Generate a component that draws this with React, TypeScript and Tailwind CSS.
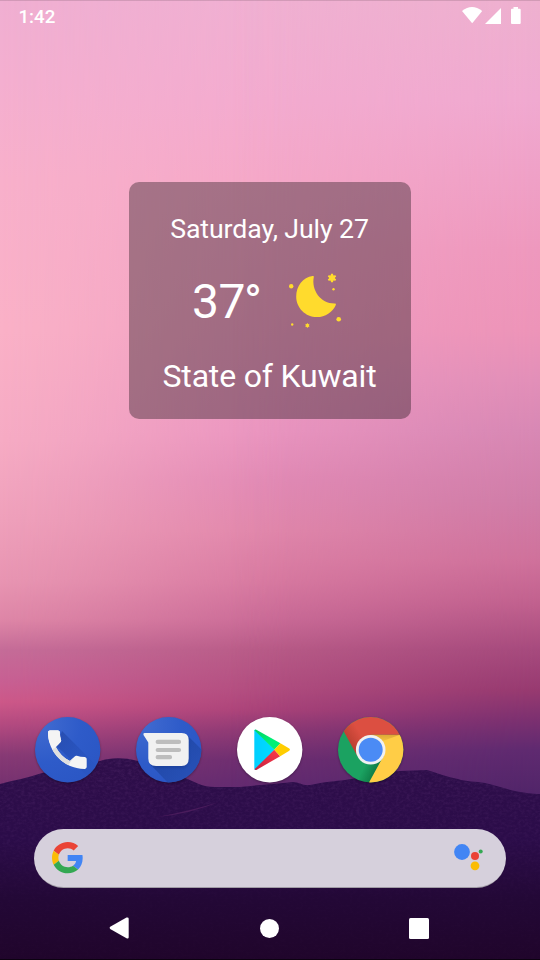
import React from "react";

type Stop = [number, string];

// Vertical colour ramps of the dusk sky at the left, middle and right.
const skyLeft: Stop[] = [
  [0, "#f0afd2"], [80, "#f4afd0"], [180, "#f8b0cb"], [330, "#fab1c7"], [440, "#f6abc4"],
  [520, "#efa0bb"], [580, "#e895b2"], [620, "#de86a7"], [650, "#c56c98"], [680, "#c86093"],
  [702, "#cd5889"], [725, "#b34a80"], [755, "#883a75"], [790, "#73306f"],
];
const skyMiddle: Stop[] = [
  [0, "#f0b0d2"], [100, "#f3abcf"], [180, "#f5a8c8"], [300, "#f1a0c3"], [430, "#ea95c0"],
  [480, "#e28ab5"], [530, "#e187ab"], [580, "#d87aa1"], [620, "#ca6b97"], [650, "#b85b87"],
  [690, "#b14d7f"], [710, "#aa4379"], [730, "#8d3974"], [760, "#6c2d70"], [790, "#602a70"],
];
const skyRight: Stop[] = [
  [0, "#eeb0cf"], [100, "#f0a9d0"], [180, "#efa0c6"], [250, "#ee98bd"], [330, "#ed94b8"],
  [380, "#e28fb8"], [430, "#d888b4"], [500, "#d07da8"], [560, "#cf719b"], [600, "#c2628f"],
  [650, "#a64a7d"], [690, "#973a70"], [720, "#7b3070"], [750, "#5f2a70"], [800, "#4f2468"],
];

function Ramp({ id, stops }: { id: string; stops: Stop[] }) {
  return (
    <linearGradient id={id} gradientUnits="userSpaceOnUse" x1="0" y1="0" x2="0" y2="960">
      {stops.map(([y, color]) => (
        <stop key={y} offset={y / 960} stopColor={color} />
      ))}
    </linearGradient>
  );
}

// Horizontal fade with eased ends, so that neighbouring ramps join without a seam.
function Fade({ id, from, to }: { id: string; from: number; to: number }) {
  const steps = [0, 0.125, 0.25, 0.375, 0.5, 0.625, 0.75, 0.875, 1];
  return (
    <linearGradient id={id} gradientUnits="userSpaceOnUse" x1={from} y1="0" x2={to} y2="0">
      {steps.map((t) => (
        <stop key={t} offset={t} stopColor="#fff" stopOpacity={0.5 * t + 0.5 * t * t * (3 - 2 * t)} />
      ))}
    </linearGradient>
  );
}

function Wallpaper() {
  const ridge =
    "M0 784 C14 780 28 778 42 773 C62 768 80 767 100 761 C110 758 122 757 138 761 C155 766 170 772 185 778 C195 782 202 787 215 787 L240 787 C258 785 275 784 293 782 C299 782 303 786 310 785 C325 782 335 781 345 780 C365 777 382 772 400 771 L427 770 C438 773 447 777 458 779 C466 782 476 781 485 783 C495 785 505 789 515 791 C525 793 532 794 540 794 V960 H0 Z";
  return (
    <svg className="absolute inset-0" width="540" height="960" viewBox="0 0 540 960">
      <defs>
        <Ramp id="skyL" stops={skyLeft} />
        <Ramp id="skyM" stops={skyMiddle} />
        <Ramp id="skyR" stops={skyRight} />
        <Fade id="fadeM" from={0} to={290} />
        <Fade id="fadeR" from={230} to={540} />
        <mask id="maskM"><rect width="540" height="960" fill="url(#fadeM)" /></mask>
        <mask id="maskR"><rect width="540" height="960" fill="url(#fadeR)" /></mask>
        <linearGradient id="ground" gradientUnits="userSpaceOnUse" x1="0" y1="758" x2="0" y2="960">
          <stop offset="0" stopColor="#2e0e4a" />
          <stop offset="0.4" stopColor="#2b0c49" />
          <stop offset="0.7" stopColor="#230836" />
          <stop offset="1" stopColor="#20052b" />
        </linearGradient>
        <filter id="grain" x="0" y="0" width="1" height="1">
          <feTurbulence type="fractalNoise" baseFrequency="0.28 0.4" numOctaves="3" seed="4" />
          <feColorMatrix values="0 0 0 0 0.42  0 0 0 0 0.16  0 0 0 0 0.5  1.2 0 0 0 -0.45" />
          <feComposite in2="SourceGraphic" operator="in" />
        </filter>
        <linearGradient id="grainFade" gradientUnits="userSpaceOnUse" x1="0" y1="758" x2="0" y2="900">
          <stop offset="0" stopColor="#fff" /><stop offset="1" stopColor="#222" />
        </linearGradient>
        <mask id="maskGrain"><rect width="540" height="960" fill="url(#grainFade)" /></mask>
      </defs>
      <rect width="540" height="960" fill="url(#skyL)" />
      <rect width="540" height="960" fill="url(#skyM)" mask="url(#maskM)" />
      <rect width="540" height="960" fill="url(#skyR)" mask="url(#maskR)" />
      <path d={ridge} fill="url(#ground)" />
      <g mask="url(#maskGrain)" opacity="0.22"><path d={ridge} filter="url(#grain)" /></g>
      <path d="M157 817 Q190 811 219 802 Q190 814 157 817Z" fill="#4a1c5c" />
      <rect width="540" height="1" fill="#000" opacity="0.12" />
      <rect y="959" width="540" height="1" fill="#000" opacity="0.6" />
    </svg>
  );
}

function StatusBar() {
  return (
    <header className="flex h-8 items-center justify-between pl-[18.500px] pr-[18px] text-white">
      <span className="pt-px text-[18.7px] leading-8 font-medium">1:42</span>
      <svg width="61" height="32" viewBox="461 0 61 32" fill="currentColor">
        <path d="M462 11 Q472 3 482.200 11 L472.200 23.200 Z" />
        <path d="M485 24 L501 8 V24 Z" />
        <path d="M513.500 7 h4.500 v1.700 h1.700 q1 0 1 1 V23 q0 1-1 1 h-7.700 q-1 0-1-1 V9.700 q0-1 1-1 h1.500 Z" />
      </svg>
    </header>
  );
}

function MoonIcon() {
  return (
    <svg width="54" height="58" viewBox="288 271 54 58" fill="#ffdb2d">
      <path d="M312.600 276 C313.500 275.900 314 276.300 313.800 277 C311.200 290 320.500 303.500 334.500 303.500 C335.700 303.400 336.200 304 335.800 305 C332.500 312.500 325.200 317.100 317 317.100 C305.500 317.100 296.200 308 296.200 296.500 C296.200 286 303 277.400 312.600 276 Z" />
      <circle cx="291.200" cy="286.200" r="2.200" />
      <circle cx="333.500" cy="289.300" r="1.200" />
      <circle cx="338.700" cy="319.300" r="2.300" />
      <circle cx="292.200" cy="324.500" r="1.200" />
      <circle cx="307.400" cy="325.500" r="1.700" />
      <path d="M307.400 323.300 v4.400 M305.500 324.400 l3.800 2.200 M309.300 324.400 l-3.800 2.200" stroke="#ffdb2d" strokeWidth="1" />
      <circle cx="332" cy="278" r="3" />
      <path d="M332 273.800 v8.400 M328.300 275.900 l7.400 4.200 M335.700 275.900 l-7.400 4.200" stroke="#ffdb2d" strokeWidth="2.200" />
    </svg>
  );
}

function WeatherCard() {
  return (
    <section className="mt-[149.500px] flex h-[237px] w-[282px] flex-col items-center self-center rounded-[10px] bg-black/33 text-white">
      <p className="mt-[31.500px] pr-px text-[26.7px] leading-8 tracking-[-0.09px] whitespace-nowrap">Saturday, July 27</p>
      <div className="mt-[26px] flex h-[58px] items-center gap-[26px] pr-[5.500px]">
        <span className="pt-1 text-[48px] leading-[56px] tracking-[-0.5px]">
          37<span className="inline-block -translate-x-px translate-y-px">°</span>
        </span>
        <MoonIcon />
      </div>
      <p className="mt-[26.500px] pr-px text-[32px] leading-10 tracking-[-0.18px] whitespace-nowrap">State of Kuwait</p>
    </section>
  );
}

function AppIcon({ children }: { children: React.ReactNode }) {
  return (
    <svg className="drop-shadow-[0_1px_1px_rgba(0,0,0,0.3)]" width="66" height="66" viewBox="0 0 66 66">
      {children}
    </svg>
  );
}

function PhoneIcon() {
  const handset =
    "M6.620 10.790c1.440 2.830 3.760 5.140 6.590 6.590l2.200-2.200c.27-.27.67-.36 1.020-.24 1.120.37 2.330.57 3.570.57.55 0 1 .45 1 1V20c0 .55-.45 1-1 1-9.390 0-17-7.610-17-17 0-.55.45-1 1-1h3.500c.55 0 1 .45 1 1 0 1.250.2 2.450.57 3.570.11.35.03.74-.25 1.020l-2.200 2.200z";
  return (
    <AppIcon>
      <defs>
        <radialGradient id="phoneBg" cx="0.1" cy="0.1" r="1"><stop offset="0" stopColor="#416bd0" /><stop offset="0.6" stopColor="#2e5bc9" /><stop offset="1" stopColor="#2b57c5" /></radialGradient>
        <linearGradient id="phoneShade" x1="0" y1="0" x2="1" y2="1"><stop offset="0.1" stopColor="#1d3f9e" stopOpacity="0.55" /><stop offset="0.9" stopColor="#2853bc" stopOpacity="0.1" /></linearGradient>
        <clipPath id="disc"><circle cx="32.700" cy="32.700" r="32.700" /></clipPath>
        <clipPath id="handset"><path d={handset} /></clipPath>
      </defs>
      <circle cx="32.700" cy="32.700" r="32.700" fill="url(#phoneBg)" />
      <g clipPath="url(#disc)">
        <path d="M27 14 L52 39 L66 53 V66 H59 L28 35 L21 29 Z" fill="url(#phoneShade)" />
      </g>
      <g transform="translate(6.550 6.750) scale(2.150)">
        <path d={handset} fill="#f4f4f4" />
        <path d="M6.620 10.790 L8.200 9.200 L14.800 15.800 L11.700 20.200 L3.800 12.700 Z" fill="#dfdfdf" clipPath="url(#handset)" />
        <path d="M3 3 H10 V7.600 L8.820 8.590 L6.620 10.790 L5.800 11.600 L3 8 Z" fill="#f4f4f4" clipPath="url(#handset)" />
      </g>
    </AppIcon>
  );
}

function MessagesIcon() {
  return (
    <AppIcon>
      <defs>
        <linearGradient id="msgShade" x1="0" y1="0" x2="1" y2="1"><stop offset="0.2" stopColor="#163a8f" /><stop offset="1" stopColor="#2a52b6" /></linearGradient>
        <filter id="soft"><feGaussianBlur stdDeviation="1.200" /></filter>
      </defs>
      <circle cx="32.700" cy="32.700" r="32.700" fill="url(#phoneBg)" />
      <g clipPath="url(#disc)">
        <path d="M51 18 L68 35 V68 H34 L14 47 Z" fill="url(#msgShade)" opacity="0.6" />
        <rect x="14" y="19" width="39" height="32" rx="8" fill="#15388c" opacity="0.45" filter="url(#soft)" />
      </g>
      <path d="M8.500 16 H45.700 Q52.700 16 52.700 23 V41.500 Q52.700 49 45.700 49 H20 Q12.300 49 12.300 41.500 V25.500 L7.500 18 Q6.900 16 8.500 16 Z" fill="#f1f1f1" />
      <path d="M21.700 24.900 H43 M21.700 33 H43 M21.700 40.200 H34" stroke="#bdbdbd" strokeWidth="4.200" strokeLinecap="round" />
    </AppIcon>
  );
}

function PlayIcon() {
  return (
    <AppIcon>
      <defs>
        <linearGradient id="playBlue" x1="0" x2="1"><stop offset="0" stopColor="#00cfff" /><stop offset="1" stopColor="#00dcff" /></linearGradient>
        <linearGradient id="playRed" x1="1" y1="0" x2="0" y2="1"><stop offset="0" stopColor="#ff3b4a" /><stop offset="1" stopColor="#c4203f" /></linearGradient>
        <linearGradient id="playGreen" x1="0" y1="0" x2="1" y2="1"><stop offset="0" stopColor="#00d264" /><stop offset="0.6" stopColor="#00f076" /></linearGradient>
      </defs>
      <circle cx="32.700" cy="32.700" r="32.700" fill="#fff" />
      <path d="M17.300 13.500 Q17.500 12.500 18.500 12.800 L37.500 32.800 L18.500 52.900 Q17.300 53 17.300 51.800 Z" fill="url(#playBlue)" />
      <path d="M17.500 13.200 Q18.300 12.200 19.800 12.900 L43.400 26.200 L37.300 32.800 Z" fill="url(#playGreen)" />
      <path d="M37.300 32.800 L43.200 39.200 L19.800 52.700 Q18.300 53.400 17.500 52.300 Z" fill="url(#playRed)" />
      <path d="M43.400 26.200 L52.300 31.600 Q53.700 32.700 52.300 33.800 L43.200 39.200 L37.300 32.800 Z" fill="#ffcd00" />
    </AppIcon>
  );
}

function ChromeIcon() {
  return (
    <AppIcon>
      <defs>
        <linearGradient id="crRed" gradientUnits="userSpaceOnUse" x1="10" y1="30" x2="25" y2="20"><stop offset="0" stopColor="#b33c2d" /><stop offset="1" stopColor="#dc4f41" /></linearGradient>
        <linearGradient id="crYellow" gradientUnits="userSpaceOnUse" x1="0" y1="17.700" x2="0" y2="27"><stop offset="0" stopColor="#dca936" /><stop offset="1" stopColor="#ffcd46" /></linearGradient>
        <linearGradient id="crGreen" gradientUnits="userSpaceOnUse" x1="40" y1="52" x2="28" y2="46"><stop offset="0" stopColor="#0d7a45" /><stop offset="1" stopColor="#1ba261" /></linearGradient>
      </defs>
      <g clipPath="url(#disc)">
        <rect width="66" height="66" fill="url(#crGreen)" />
        <path d="M32.700 17.700 H66 V66 H30.700 L45.500 39 Z" fill="#ffcd46" />
        <path d="M32.700 17.700 H62 L45 24 Z" fill="url(#crYellow)" />
        <path d="M5.500 14 L19 38.500 L32.700 32 V17.700 H66 V0 H0 Z" fill="url(#crRed)" />
      </g>
      <circle cx="32.700" cy="32.800" r="14.800" fill="#f1f1f1" />
      <circle cx="32.700" cy="32.800" r="12" fill="#4b8bf5" />
    </AppIcon>
  );
}

function SearchBar() {
  return (
    <div className="mt-[46px] ml-[34px] flex h-[59px] w-[472px] items-center justify-between rounded-full border-b border-black/25 bg-[#d6d0dc] pr-[22px] pl-[17.500px]">
      <svg width="32" height="32" viewBox="0 0 49 49">
        <path fill="#EA4335" d="M24 9.500c3.540 0 6.710 1.220 9.210 3.600l6.850-6.850C35.900 2.380 30.470 0 24 0 14.620 0 6.510 5.380 2.560 13.220l7.980 6.190C12.430 13.720 17.740 9.500 24 9.500z" />
        <path fill="#4285F4" d="M46.980 24.550c0-1.570-.15-3.090-.38-4.550H24v9.020h12.940c-.58 2.960-2.260 5.480-4.780 7.180l7.730 6c4.510-4.180 7.090-10.360 7.090-17.650z" />
        <path fill="#FBBC05" d="M10.530 28.590c-.48-1.450-.76-2.990-.76-4.590s.27-3.140.76-4.590l-7.980-6.190C.92 16.460 0 20.120 0 24c0 3.880.92 7.540 2.560 10.780l7.970-6.190z" />
        <path fill="#34A853" d="M24 48c6.480 0 11.930-2.130 15.890-5.810l-7.730-6c-2.150 1.450-4.920 2.300-8.160 2.300-6.260 0-11.570-4.220-13.470-9.910l-7.980 6.190C6.510 42.620 14.620 48 24 48z" />
      </svg>
      <svg width="30" height="30" viewBox="454 843 30 30">
        <circle cx="462" cy="852" r="7.900" fill="#4285f4" />
        <circle cx="475" cy="856" r="4" fill="#ea4335" />
        <circle cx="480.700" cy="851.500" r="2" fill="#34a853" />
        <circle cx="475" cy="865.800" r="4.400" fill="#fbbc05" />
      </svg>
    </div>
  );
}

function NavBar() {
  return (
    <nav className="flex flex-1 items-center justify-between pt-[8.500px] pr-[111px] pl-[109px]">
      <svg width="21" height="22" viewBox="0 0 21 22" fill="#fff">
        <path d="M1.200 9.800 L17.500 0.600 Q19.700 0 19.700 1.800 V20.200 Q19.700 22 17.500 21.300 L1.200 12 Q0 10.900 1.200 9.800 Z" />
      </svg>
      <div className="mr-px size-[19px] rounded-full bg-white" />
      <div className="h-[20.500px] w-5 rounded-[1.500px] bg-white" />
    </nav>
  );
}

export default function App() {
  return (
    <main className="relative h-[960px] w-[540px] overflow-hidden font-[Roboto,sans-serif]">
      <Wallpaper />
      <div className="relative flex h-full flex-col">
        <StatusBar />
        <WeatherCard />
        <div className="mt-[298.500px] flex gap-[35px] pl-[35px]">
          <PhoneIcon />
          <MessagesIcon />
          <PlayIcon />
          <ChromeIcon />
        </div>
        <SearchBar />
        <NavBar />
      </div>
    </main>
  );
}
